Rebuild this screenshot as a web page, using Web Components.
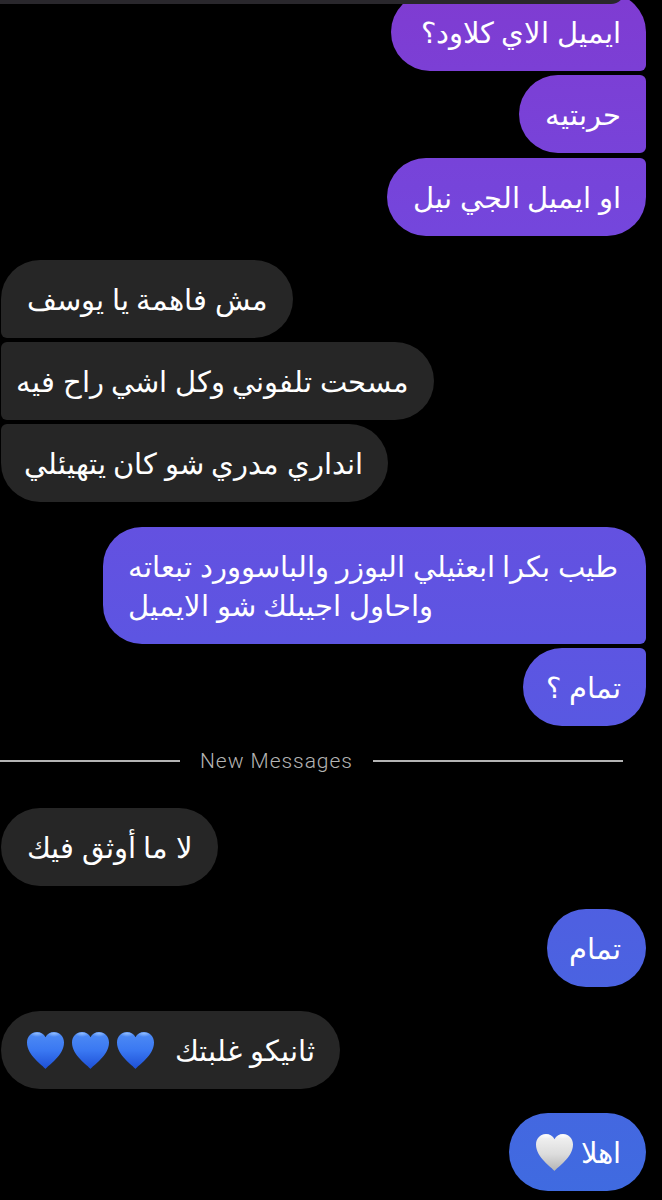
<!DOCTYPE html>
<html lang="ar">
<head>
<meta charset="utf-8">
<style>
  html, body { margin: 0; background: #000; }
  body { height: 1200px; overflow: hidden; }
</style>
</head>
<body>
<chat-thread>
  <chat-bubble mine corners="39 39 6 39" width="255" style="margin-top:-7px">ايميل الاي كلاود؟</chat-bubble>
  <chat-bubble mine corners="39 6 6 39" width="127" style="margin-top:4px">حربتيه</chat-bubble>
  <chat-bubble mine corners="39 6 39 39" width="259" style="margin-top:5px">او ايميل الجي نيل</chat-bubble>
  <chat-bubble corners="39 39 39 6" width="292" style="margin-top:24px">مش فاهمة يا يوسف</chat-bubble>
  <chat-bubble corners="6 39 39 6" width="433" style="margin-top:4px">مسحت تلفوني وكل اشي راح فيه</chat-bubble>
  <chat-bubble corners="6 39 39 39" width="387" style="margin-top:4px">انداري مدري شو كان يتهيئلي</chat-bubble>
  <chat-bubble mine multi corners="39 39 6 39" width="543" style="margin-top:25px">طيب بكرا ابعثيلي اليوزر والباسوورد تبعاته<br>واحاول اجيبلك شو الايميل</chat-bubble>
  <chat-bubble mine corners="39 6 39 39" width="123" style="margin-top:4px">تمام ؟</chat-bubble>
  <new-divider label="New Messages"></new-divider>
  <chat-bubble corners="39 39 39 39" width="217" style="margin-top:35px">لا ما أوثق فيك</chat-bubble>
  <chat-bubble mine corners="39 39 39 39" width="99" style="margin-top:23px">تمام</chat-bubble>
  <chat-bubble corners="39 39 39 39" width="339" style="margin-top:24px">ثانيكو غلبتك <emoji-heart style="margin-right:14px"></emoji-heart><emoji-heart></emoji-heart><emoji-heart></emoji-heart></chat-bubble>
  <chat-bubble mine corners="39 39 39 39" width="137" style="margin-top:24px">اهلا<emoji-heart white></emoji-heart></chat-bubble>
</chat-thread>
<script>
class ChatThread extends HTMLElement {
  constructor() {
    super();
    this.attachShadow({ mode: "open" });
    this.shadowRoot.innerHTML = `
      <style>
        :host { display: block; position: relative; background: #000; height: 1200px; overflow: hidden; }
        .reply-bar {
          position: absolute; z-index: 1; left: 0; top: -20px; width: 625px; height: 24px;
          background: #29272c; border-radius: 0 0 14px 0;
        }
        .list { display: flex; flex-direction: column; }
      </style>
      <div class="reply-bar"></div>
      <div class="list"><slot></slot></div>`;
  }
}
customElements.define("chat-thread", ChatThread);

class ChatBubble extends HTMLElement {
  constructor() {
    super();
    this.attachShadow({ mode: "open" });
  }
  connectedCallback() {
    const radius = this.getAttribute("corners").split(" ").map(r => r + "px").join(" ");
    this.shadowRoot.innerHTML = `
      <style>
        :host { display: block; align-self: flex-start; margin-left: 1px; }
        :host([mine]) { align-self: flex-end; margin-left: 0; margin-right: 16px; }
        .b {
          box-sizing: border-box;
          width: ${this.getAttribute("width")}px;
          min-height: 78px;
          padding: 18.5px 25px 20.5px;
          direction: rtl;
          white-space: nowrap;
          border-radius: ${radius};
          background: #262626;
          color: #fff;
          font: 300 29px/39px "Noto Sans", "DejaVu Sans", sans-serif;
        }
        :host([mine]) .b {
          background: linear-gradient(180deg, #7f3cd2 0, #7446dc 230px, #5d55e2 640px, #3f6be0 1200px) fixed;
        }
        :host([multi]) .b { text-align: left; }
      </style>
      <div class="b"><slot></slot></div>`;
  }
}
customElements.define("chat-bubble", ChatBubble);

class EmojiHeart extends HTMLElement {
  constructor() {
    super();
    this.attachShadow({ mode: "open" });
    const white = this.hasAttribute("white");
    const stops = white
      ? `<stop offset="0" stop-color="#f4f4f4"/><stop offset=".55" stop-color="#dcdcdc"/><stop offset="1" stop-color="#b4b4b4"/>`
      : `<stop offset="0" stop-color="#4f8cf5"/><stop offset=".5" stop-color="#3a78f2"/><stop offset="1" stop-color="#1d4fd6"/>`;
    const shine = white ? "#ffffff" : "#9cc4ff";
    this.shadowRoot.innerHTML = `
      <style>
        :host { display: inline-block; width: 37px; height: 37px; vertical-align: -4px; margin: -4px 8px -4px 0; }
        svg { display: block; width: 37px; height: 37px; }
      </style>
      <svg viewBox="0 0 37 37" aria-hidden="true">
        <defs>
          <linearGradient id="g" x1="0" y1="0" x2="0" y2="1">${stops}</linearGradient>
          <radialGradient id="s" cx=".5" cy="0" r=".55"><stop offset="0" stop-color="${shine}"/><stop offset="1" stop-color="${shine}" stop-opacity="0"/></radialGradient>
        </defs>
        <path fill="url(#g)" d="M18.500 37C16 33.500 0 23.500 0 10.500 0 4.200 4.500 0 10 0c3.800 0 6.900 2 8.500 5.200C20.100 2 23.200 0 27 0c5.500 0 10 4.200 10 10.500C37 23.500 21 33.500 18.500 37z"/>
        <ellipse cx="10" cy="4.500" rx="7.500" ry="4" fill="url(#s)"/>
        <ellipse cx="27" cy="4.500" rx="7.500" ry="4" fill="url(#s)"/>
      </svg>`;
  }
}
customElements.define("emoji-heart", EmojiHeart);

class NewDivider extends HTMLElement {
  constructor() {
    super();
    this.attachShadow({ mode: "open" });
  }
  connectedCallback() {
    this.shadowRoot.innerHTML = `
      <style>
        :host { display: flex; align-items: center; margin: 23px 39px 0 0; height: 24px; color: #b4b4b4;
          font: 300 21px/24px Roboto, "Liberation Sans", sans-serif; letter-spacing: .95px; }
        i { flex: 1; height: 2px; background: #b4b4b4; }
        i:first-of-type { flex: 0 0 180px; }
        span { margin: 0 20px; white-space: nowrap; }
      </style>
      <i></i><span>${this.getAttribute("label")}</span><i></i>`;
  }
}
customElements.define("new-divider", NewDivider);
</script>
</body>
</html>
